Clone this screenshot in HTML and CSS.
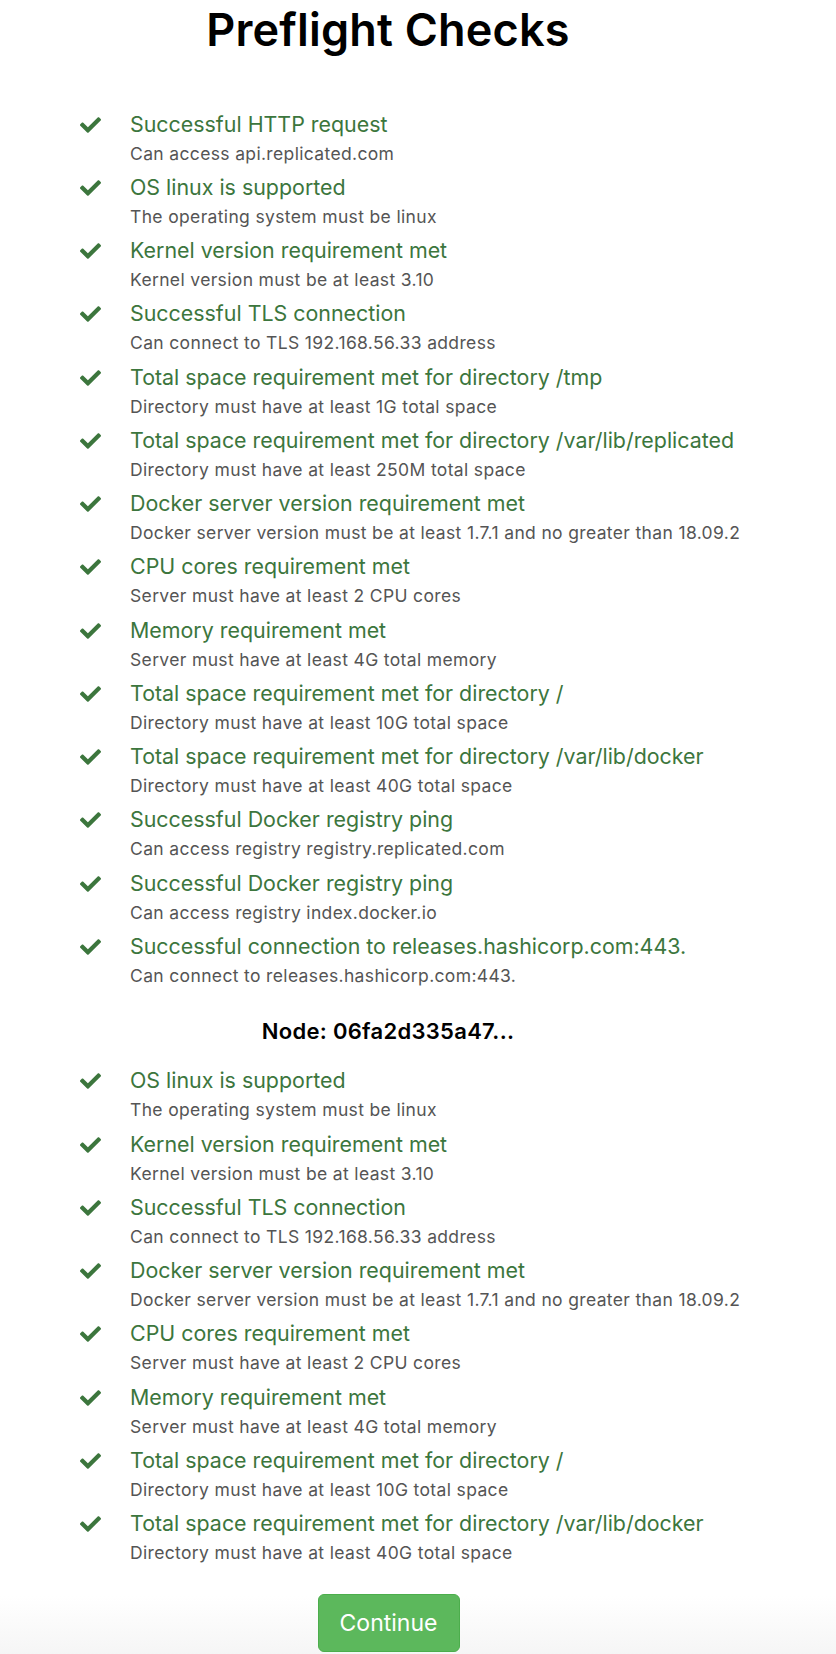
FILE: index.html
```html
<!DOCTYPE html>
<html lang="en">
<head>
<meta charset="utf-8">
<title>Preflight Checks</title>
<link rel="stylesheet" href="styles.css">
</head>
<body>
<div class="page">
  <h1 class="page-title">Preflight Checks</h1>

  <ul class="checks checks-main">
    <li class="check"><svg class="check-icon" viewBox="0 66 512 380"><path d="M173.898 439.404l-166.4-166.4c-9.997-9.997-9.997-26.206 0-36.204l36.203-36.204c9.997-9.998 26.207-9.998 36.204 0L192 312.69 432.095 72.596c9.997-9.997 26.207-9.997 36.204 0l36.203 36.204c9.997 9.997 9.997 26.206 0 36.204l-294.4 294.401c-9.998 9.997-26.207 9.997-36.204-.001z"/></svg><div class="check-body"><div class="check-title">Successful HTTP request</div><div class="check-desc">Can access api.replicated.com</div></div></li>
    <li class="check"><svg class="check-icon" viewBox="0 66 512 380"><path d="M173.898 439.404l-166.4-166.4c-9.997-9.997-9.997-26.206 0-36.204l36.203-36.204c9.997-9.998 26.207-9.998 36.204 0L192 312.69 432.095 72.596c9.997-9.997 26.207-9.997 36.204 0l36.203 36.204c9.997 9.997 9.997 26.206 0 36.204l-294.4 294.401c-9.998 9.997-26.207 9.997-36.204-.001z"/></svg><div class="check-body"><div class="check-title">OS linux is supported</div><div class="check-desc">The operating system must be linux</div></div></li>
    <li class="check"><svg class="check-icon" viewBox="0 66 512 380"><path d="M173.898 439.404l-166.4-166.4c-9.997-9.997-9.997-26.206 0-36.204l36.203-36.204c9.997-9.998 26.207-9.998 36.204 0L192 312.69 432.095 72.596c9.997-9.997 26.207-9.997 36.204 0l36.203 36.204c9.997 9.997 9.997 26.206 0 36.204l-294.4 294.401c-9.998 9.997-26.207 9.997-36.204-.001z"/></svg><div class="check-body"><div class="check-title">Kernel version requirement met</div><div class="check-desc">Kernel version must be at least 3.10</div></div></li>
    <li class="check"><svg class="check-icon" viewBox="0 66 512 380"><path d="M173.898 439.404l-166.4-166.4c-9.997-9.997-9.997-26.206 0-36.204l36.203-36.204c9.997-9.998 26.207-9.998 36.204 0L192 312.69 432.095 72.596c9.997-9.997 26.207-9.997 36.204 0l36.203 36.204c9.997 9.997 9.997 26.206 0 36.204l-294.4 294.401c-9.998 9.997-26.207 9.997-36.204-.001z"/></svg><div class="check-body"><div class="check-title">Successful TLS connection</div><div class="check-desc">Can connect to TLS 192.168.56.33 address</div></div></li>
    <li class="check"><svg class="check-icon" viewBox="0 66 512 380"><path d="M173.898 439.404l-166.4-166.4c-9.997-9.997-9.997-26.206 0-36.204l36.203-36.204c9.997-9.998 26.207-9.998 36.204 0L192 312.69 432.095 72.596c9.997-9.997 26.207-9.997 36.204 0l36.203 36.204c9.997 9.997 9.997 26.206 0 36.204l-294.4 294.401c-9.998 9.997-26.207 9.997-36.204-.001z"/></svg><div class="check-body"><div class="check-title">Total space requirement met for directory /tmp</div><div class="check-desc">Directory must have at least 1G total space</div></div></li>
    <li class="check"><svg class="check-icon" viewBox="0 66 512 380"><path d="M173.898 439.404l-166.4-166.4c-9.997-9.997-9.997-26.206 0-36.204l36.203-36.204c9.997-9.998 26.207-9.998 36.204 0L192 312.69 432.095 72.596c9.997-9.997 26.207-9.997 36.204 0l36.203 36.204c9.997 9.997 9.997 26.206 0 36.204l-294.4 294.401c-9.998 9.997-26.207 9.997-36.204-.001z"/></svg><div class="check-body"><div class="check-title">Total space requirement met for directory /var/lib/replicated</div><div class="check-desc">Directory must have at least 250M total space</div></div></li>
    <li class="check"><svg class="check-icon" viewBox="0 66 512 380"><path d="M173.898 439.404l-166.4-166.4c-9.997-9.997-9.997-26.206 0-36.204l36.203-36.204c9.997-9.998 26.207-9.998 36.204 0L192 312.69 432.095 72.596c9.997-9.997 26.207-9.997 36.204 0l36.203 36.204c9.997 9.997 9.997 26.206 0 36.204l-294.4 294.401c-9.998 9.997-26.207 9.997-36.204-.001z"/></svg><div class="check-body"><div class="check-title">Docker server version requirement met</div><div class="check-desc">Docker server version must be at least 1.7.1 and no greater than 18.09.2</div></div></li>
    <li class="check"><svg class="check-icon" viewBox="0 66 512 380"><path d="M173.898 439.404l-166.4-166.4c-9.997-9.997-9.997-26.206 0-36.204l36.203-36.204c9.997-9.998 26.207-9.998 36.204 0L192 312.69 432.095 72.596c9.997-9.997 26.207-9.997 36.204 0l36.203 36.204c9.997 9.997 9.997 26.206 0 36.204l-294.4 294.401c-9.998 9.997-26.207 9.997-36.204-.001z"/></svg><div class="check-body"><div class="check-title">CPU cores requirement met</div><div class="check-desc">Server must have at least 2 CPU cores</div></div></li>
    <li class="check"><svg class="check-icon" viewBox="0 66 512 380"><path d="M173.898 439.404l-166.4-166.4c-9.997-9.997-9.997-26.206 0-36.204l36.203-36.204c9.997-9.998 26.207-9.998 36.204 0L192 312.69 432.095 72.596c9.997-9.997 26.207-9.997 36.204 0l36.203 36.204c9.997 9.997 9.997 26.206 0 36.204l-294.4 294.401c-9.998 9.997-26.207 9.997-36.204-.001z"/></svg><div class="check-body"><div class="check-title">Memory requirement met</div><div class="check-desc">Server must have at least 4G total memory</div></div></li>
    <li class="check"><svg class="check-icon" viewBox="0 66 512 380"><path d="M173.898 439.404l-166.4-166.4c-9.997-9.997-9.997-26.206 0-36.204l36.203-36.204c9.997-9.998 26.207-9.998 36.204 0L192 312.69 432.095 72.596c9.997-9.997 26.207-9.997 36.204 0l36.203 36.204c9.997 9.997 9.997 26.206 0 36.204l-294.4 294.401c-9.998 9.997-26.207 9.997-36.204-.001z"/></svg><div class="check-body"><div class="check-title">Total space requirement met for directory /</div><div class="check-desc">Directory must have at least 10G total space</div></div></li>
    <li class="check"><svg class="check-icon" viewBox="0 66 512 380"><path d="M173.898 439.404l-166.4-166.4c-9.997-9.997-9.997-26.206 0-36.204l36.203-36.204c9.997-9.998 26.207-9.998 36.204 0L192 312.69 432.095 72.596c9.997-9.997 26.207-9.997 36.204 0l36.203 36.204c9.997 9.997 9.997 26.206 0 36.204l-294.4 294.401c-9.998 9.997-26.207 9.997-36.204-.001z"/></svg><div class="check-body"><div class="check-title">Total space requirement met for directory /var/lib/docker</div><div class="check-desc">Directory must have at least 40G total space</div></div></li>
    <li class="check"><svg class="check-icon" viewBox="0 66 512 380"><path d="M173.898 439.404l-166.4-166.4c-9.997-9.997-9.997-26.206 0-36.204l36.203-36.204c9.997-9.998 26.207-9.998 36.204 0L192 312.69 432.095 72.596c9.997-9.997 26.207-9.997 36.204 0l36.203 36.204c9.997 9.997 9.997 26.206 0 36.204l-294.4 294.401c-9.998 9.997-26.207 9.997-36.204-.001z"/></svg><div class="check-body"><div class="check-title">Successful Docker registry ping</div><div class="check-desc">Can access registry registry.replicated.com</div></div></li>
    <li class="check"><svg class="check-icon" viewBox="0 66 512 380"><path d="M173.898 439.404l-166.4-166.4c-9.997-9.997-9.997-26.206 0-36.204l36.203-36.204c9.997-9.998 26.207-9.998 36.204 0L192 312.69 432.095 72.596c9.997-9.997 26.207-9.997 36.204 0l36.203 36.204c9.997 9.997 9.997 26.206 0 36.204l-294.4 294.401c-9.998 9.997-26.207 9.997-36.204-.001z"/></svg><div class="check-body"><div class="check-title">Successful Docker registry ping</div><div class="check-desc">Can access registry index.docker.io</div></div></li>
    <li class="check"><svg class="check-icon" viewBox="0 66 512 380"><path d="M173.898 439.404l-166.4-166.4c-9.997-9.997-9.997-26.206 0-36.204l36.203-36.204c9.997-9.998 26.207-9.998 36.204 0L192 312.69 432.095 72.596c9.997-9.997 26.207-9.997 36.204 0l36.203 36.204c9.997 9.997 9.997 26.206 0 36.204l-294.4 294.401c-9.998 9.997-26.207 9.997-36.204-.001z"/></svg><div class="check-body"><div class="check-title">Successful connection to releases.hashicorp.com:443.</div><div class="check-desc">Can connect to releases.hashicorp.com:443.</div></div></li>
  </ul>

  <h2 class="node-title">Node: 06fa2d335a47...</h2>

  <ul class="checks checks-node">
    <li class="check"><svg class="check-icon" viewBox="0 66 512 380"><path d="M173.898 439.404l-166.4-166.4c-9.997-9.997-9.997-26.206 0-36.204l36.203-36.204c9.997-9.998 26.207-9.998 36.204 0L192 312.69 432.095 72.596c9.997-9.997 26.207-9.997 36.204 0l36.203 36.204c9.997 9.997 9.997 26.206 0 36.204l-294.4 294.401c-9.998 9.997-26.207 9.997-36.204-.001z"/></svg><div class="check-body"><div class="check-title">OS linux is supported</div><div class="check-desc">The operating system must be linux</div></div></li>
    <li class="check"><svg class="check-icon" viewBox="0 66 512 380"><path d="M173.898 439.404l-166.4-166.4c-9.997-9.997-9.997-26.206 0-36.204l36.203-36.204c9.997-9.998 26.207-9.998 36.204 0L192 312.69 432.095 72.596c9.997-9.997 26.207-9.997 36.204 0l36.203 36.204c9.997 9.997 9.997 26.206 0 36.204l-294.4 294.401c-9.998 9.997-26.207 9.997-36.204-.001z"/></svg><div class="check-body"><div class="check-title">Kernel version requirement met</div><div class="check-desc">Kernel version must be at least 3.10</div></div></li>
    <li class="check"><svg class="check-icon" viewBox="0 66 512 380"><path d="M173.898 439.404l-166.4-166.4c-9.997-9.997-9.997-26.206 0-36.204l36.203-36.204c9.997-9.998 26.207-9.998 36.204 0L192 312.69 432.095 72.596c9.997-9.997 26.207-9.997 36.204 0l36.203 36.204c9.997 9.997 9.997 26.206 0 36.204l-294.4 294.401c-9.998 9.997-26.207 9.997-36.204-.001z"/></svg><div class="check-body"><div class="check-title">Successful TLS connection</div><div class="check-desc">Can connect to TLS 192.168.56.33 address</div></div></li>
    <li class="check"><svg class="check-icon" viewBox="0 66 512 380"><path d="M173.898 439.404l-166.4-166.4c-9.997-9.997-9.997-26.206 0-36.204l36.203-36.204c9.997-9.998 26.207-9.998 36.204 0L192 312.69 432.095 72.596c9.997-9.997 26.207-9.997 36.204 0l36.203 36.204c9.997 9.997 9.997 26.206 0 36.204l-294.4 294.401c-9.998 9.997-26.207 9.997-36.204-.001z"/></svg><div class="check-body"><div class="check-title">Docker server version requirement met</div><div class="check-desc">Docker server version must be at least 1.7.1 and no greater than 18.09.2</div></div></li>
    <li class="check"><svg class="check-icon" viewBox="0 66 512 380"><path d="M173.898 439.404l-166.4-166.4c-9.997-9.997-9.997-26.206 0-36.204l36.203-36.204c9.997-9.998 26.207-9.998 36.204 0L192 312.69 432.095 72.596c9.997-9.997 26.207-9.997 36.204 0l36.203 36.204c9.997 9.997 9.997 26.206 0 36.204l-294.4 294.401c-9.998 9.997-26.207 9.997-36.204-.001z"/></svg><div class="check-body"><div class="check-title">CPU cores requirement met</div><div class="check-desc">Server must have at least 2 CPU cores</div></div></li>
    <li class="check"><svg class="check-icon" viewBox="0 66 512 380"><path d="M173.898 439.404l-166.4-166.4c-9.997-9.997-9.997-26.206 0-36.204l36.203-36.204c9.997-9.998 26.207-9.998 36.204 0L192 312.69 432.095 72.596c9.997-9.997 26.207-9.997 36.204 0l36.203 36.204c9.997 9.997 9.997 26.206 0 36.204l-294.4 294.401c-9.998 9.997-26.207 9.997-36.204-.001z"/></svg><div class="check-body"><div class="check-title">Memory requirement met</div><div class="check-desc">Server must have at least 4G total memory</div></div></li>
    <li class="check"><svg class="check-icon" viewBox="0 66 512 380"><path d="M173.898 439.404l-166.4-166.4c-9.997-9.997-9.997-26.206 0-36.204l36.203-36.204c9.997-9.998 26.207-9.998 36.204 0L192 312.69 432.095 72.596c9.997-9.997 26.207-9.997 36.204 0l36.203 36.204c9.997 9.997 9.997 26.206 0 36.204l-294.4 294.401c-9.998 9.997-26.207 9.997-36.204-.001z"/></svg><div class="check-body"><div class="check-title">Total space requirement met for directory /</div><div class="check-desc">Directory must have at least 10G total space</div></div></li>
    <li class="check"><svg class="check-icon" viewBox="0 66 512 380"><path d="M173.898 439.404l-166.4-166.4c-9.997-9.997-9.997-26.206 0-36.204l36.203-36.204c9.997-9.998 26.207-9.998 36.204 0L192 312.69 432.095 72.596c9.997-9.997 26.207-9.997 36.204 0l36.203 36.204c9.997 9.997 9.997 26.206 0 36.204l-294.4 294.401c-9.998 9.997-26.207 9.997-36.204-.001z"/></svg><div class="check-body"><div class="check-title">Total space requirement met for directory /var/lib/docker</div><div class="check-desc">Directory must have at least 40G total space</div></div></li>
  </ul>
</div>
<div class="footer">
  <div class="footer-inner">
    <button class="btn-continue" type="button">Continue</button>
  </div>
</div>
</body>
</html>
```

FILE: styles.css
```css
html, body {
  margin: 0;
  padding: 0;
  background: #ffffff;
}

body {
  font-family: Inter, "Liberation Sans", sans-serif;
  color: #000;
}

.page {
  width: 776px;
}

.page-title {
  margin: 0;
  height: 60px;
  line-height: 60px;
  text-align: center;
  font-size: 45px;
  font-weight: 600;
  letter-spacing: 0.2px;
  color: #000;
}

.checks {
  list-style: none;
  margin: 0;
  padding: 0 0 0 80px;
  display: flex;
  flex-direction: column;
  gap: 5.25px;
}

.checks-main {
  margin-top: 47.5px;
}

.check {
  display: flex;
  align-items: flex-start;
}

.check-icon {
  width: 21px;
  height: 16px;
  margin-top: 9px;
  margin-right: 29px;
  fill: #3c763d;
  flex: none;
}

.check-body {
  display: flex;
  flex-direction: column;
  gap: 1px;
}

.check-title {
  font-size: 21.4px;
  line-height: 33px;
  height: 33px;
  color: #3c763d;
  white-space: nowrap;
}

.check-desc {
  font-size: 17.5px;
  line-height: 24px;
  height: 24px;
  color: #555555;
  letter-spacing: 0.35px;
  white-space: nowrap;
}

.node-title {
  margin: 28px 0 0 0;
  height: 30px;
  line-height: 30px;
  text-align: center;
  font-size: 22px;
  font-weight: 600;
  letter-spacing: 0.3px;
  color: #000;
}

.checks-node {
  margin-top: 18.5px;
}

.footer {
  margin-top: 7px;
  padding: 22px 0 40px;
  background: linear-gradient(to bottom, #ffffff 0%, #ffffff 20%, #efefef 100%);
}

.footer-inner {
  width: 776px;
  display: flex;
  justify-content: center;
}

.btn-continue {
  width: 142px;
  height: 58px;
  margin-left: 1px;
  padding: 0;
  border: 1px solid #4cae4c;
  border-radius: 6px;
  background: #5cb85c;
  color: #ffffff;
  font-family: Inter, "Liberation Sans", sans-serif;
  font-size: 23px;
  font-weight: 400;
  cursor: pointer;
}
```
